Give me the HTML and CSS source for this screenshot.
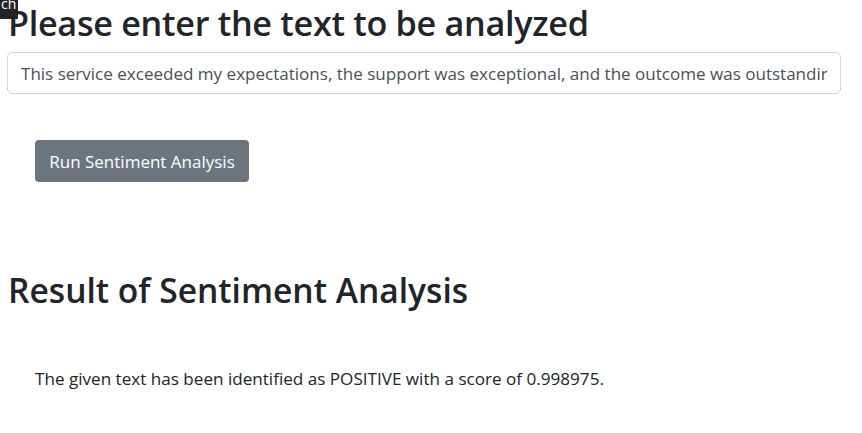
FILE: index.html
```html
<!DOCTYPE html>
<html>
<head>
<meta charset="utf-8">
<link rel="stylesheet" href="styles.css">
</head>
<body>
<div class="tip">ch</div>
<h1 class="title">Please enter the text to be analyzed</h1>
<input class="field" type="text" value="This service exceeded my expectations, the support was exceptional, and the outcome was outstanding!">
<div class="actions">
  <button class="btn">Run Sentiment Analysis</button>
</div>
<h2 class="result-title">Result of Sentiment Analysis</h2>
<p class="result">The given text has been identified as POSITIVE with a score of 0.998975.</p>
</body>
</html>
```
FILE: styles.css
```css
html, body {
  margin: 0;
  padding: 0;
  background: #fff;
}
body {
  font-family: "Open Sans", "Noto Sans", sans-serif;
  color: #212529;
  padding: 0 8px;
  position: relative;
}
.tip {
  position: absolute;
  left: 0;
  top: 0;
  width: 18px;
  height: 19px;
  background: #212529;
  color: #fff;
  font-size: 14px;
  line-height: 8px;
  overflow: hidden;
  padding-left: 1px;
  box-sizing: border-box;
  z-index: 2;
}
.title {
  font-size: 34.2px;
  font-weight: 600;
  line-height: 42px;
  margin: 0;
  padding-top: 2px;
  letter-spacing: -0.3px;
}
.field {
  display: block;
  box-sizing: border-box;
  width: 834px;
  height: 42px;
  margin: 8px 0 0 -1px;
  padding: 0 13px;
  border: 1px solid #ced4da;
  border-radius: 5px;
  font-family: inherit;
  font-size: 17.05px;
  color: #495057;
  background: #fff;
}
.actions {
  padding: 46px 0 0 27px;
}
.btn {
  display: inline-block;
  height: 42px;
  width: 214px;
  padding: 0;
  border: 0;
  border-radius: 4px;
  background: #6c757d;
  color: #fff;
  font-family: inherit;
  font-size: 17px;
}
.result-title {
  font-size: 33.6px;
  font-weight: 600;
  line-height: 40px;
  margin: 88px 0 0;
}
.result {
  font-size: 17.1px;
  margin: 57px 0 0 27px;
  line-height: 24px;
}
```
